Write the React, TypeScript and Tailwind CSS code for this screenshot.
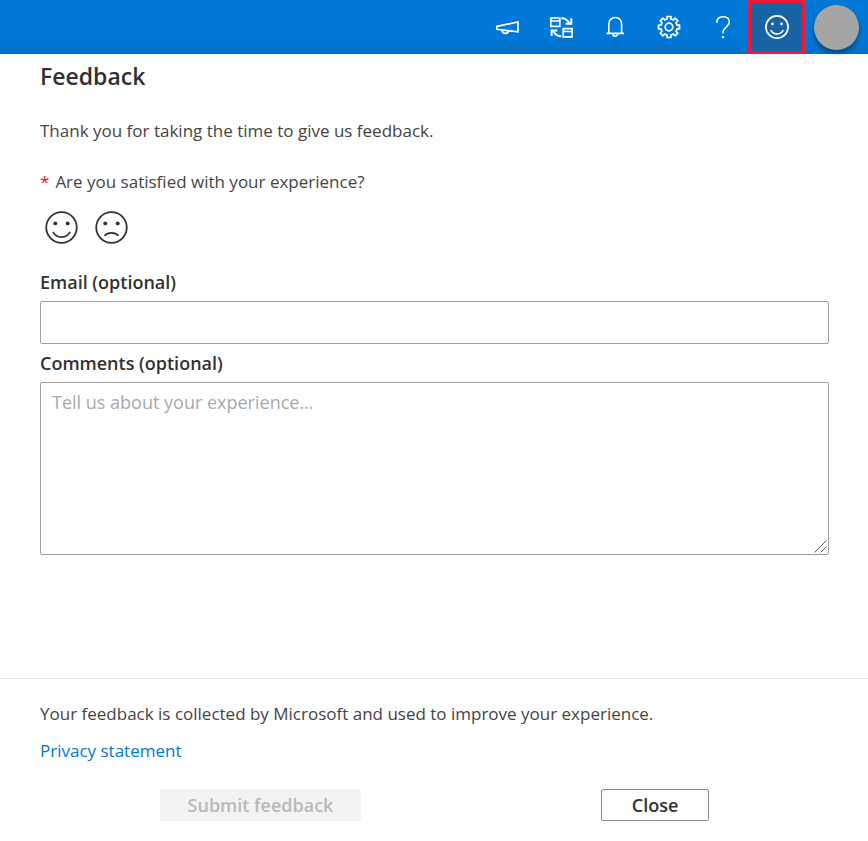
import type { ReactNode } from "react";

function HeaderButton({ label, children }: { label: string; children: ReactNode }) {
  return (
    <button type="button" aria-label={label} className="flex h-full w-[54px] items-center justify-center">
      {children}
    </button>
  );
}

function Face({ mood, className, stroke }: { mood: "happy" | "sad"; className: string; stroke: number }) {
  return (
    <svg viewBox="0 0 32 32" className={className} fill="none" stroke="currentColor" strokeWidth={stroke} aria-hidden="true">
      <circle cx="16" cy="16" r="14.8" />
      <circle cx="10" cy="12" r="1.9" fill="currentColor" stroke="none" />
      <circle cx="22" cy="12" r="1.9" fill="currentColor" stroke="none" />
      {mood === "happy" ? <path d="M7.6 20.2C11.6 26.9 20.4 26.9 24.4 20.2" /> : <path d="M9.2 24C12.5 20.4 19.5 20.4 22.8 24" />}
    </svg>
  );
}

const gearPath = Array.from({ length: 8 }, (_, i) => {
  const points = [
    [-22.5, 8.2],
    [-13, 8.2],
    [-10.5, 10.7],
    [10.5, 10.7],
    [13, 8.2],
  ];
  return points
    .map(([angle, radius], j) => {
      const t = ((angle + i * 45) * Math.PI) / 180;
      return `${i === 0 && j === 0 ? "M" : "L"}${(12 + radius * Math.sin(t)).toFixed(2)} ${(12 - radius * Math.cos(t)).toFixed(2)}`;
    })
    .join("");
}).join("") + "Z";

export default function App() {
  return (
    <div className="flex min-h-screen flex-col bg-white font-['Segoe_UI','Open_Sans',sans-serif] text-[17px] leading-6 text-[#323130]">
      <header className="flex h-[54px] items-center justify-end bg-linear-to-b from-[#0078d7] from-70% to-[#0070c9] text-white">
        <HeaderButton label="Announcements">
          <svg viewBox="0 0 24 24" className="size-6" fill="none" stroke="currentColor" strokeWidth="1.7" aria-hidden="true">
            <path d="M1.8 11.3 23 7v9.8L1.8 14.3Z" />
            <path d="M7.2 15.2c.3 4.2 5.7 4.2 6.2.8" />
          </svg>
        </HeaderButton>
        <HeaderButton label="Switch directory">
          <svg viewBox="0 0 24 24" className="size-6" fill="none" stroke="currentColor" strokeWidth="1.7" aria-hidden="true">
            <path d="M1.8 3h9v8.4h-9ZM1.8 6h9M14.2 13.6h8.9v8.2h-8.9ZM14.2 16.5h8.9" />
            <path d="M12.4 3.3c4 0 6.2 1.8 7.9 5M22.3 3.3v5.4h-5.8M12.2 21.3c-4.1 0-6.4-2-7.8-5.4M2.6 21.1v-5.6h5.8" strokeWidth="2" />
          </svg>
        </HeaderButton>
        <HeaderButton label="Notifications">
          <svg viewBox="0 0 24 24" className="size-6" fill="none" stroke="currentColor" strokeWidth="1.6" aria-hidden="true">
            <path d="M3.4 18.4h17.6M5.8 18.4V9.4c0-4.3 2.7-6.9 6.4-6.9s6.4 2.6 6.4 6.9v9" />
            <path d="M9.8 18.8a2.4 2.4 0 0 0 4.8 0" />
          </svg>
        </HeaderButton>
        <HeaderButton label="Settings">
          <svg viewBox="0 0 24 24" className="size-6" fill="none" stroke="currentColor" strokeWidth="1.7" strokeLinejoin="round" aria-hidden="true">
            <path d={gearPath} />
            <circle cx="12" cy="12" r="3.8" />
          </svg>
        </HeaderButton>
        <HeaderButton label="Help">
          <svg viewBox="0 0 24 24" className="size-6" fill="none" stroke="currentColor" strokeWidth="1.6" aria-hidden="true">
            <path d="M5.8 7.8C5.8 4 8.2 1.7 12 1.7c3.8 0 6.3 2 6.3 5.2 0 4.9-6.3 5.5-6.3 10.2v1.2" />
            <path d="M12 21v2.2" strokeWidth="2.2" />
          </svg>
        </HeaderButton>
        <button type="button" aria-label="Feedback" className="-ml-0.5 flex h-full w-[57px] items-center justify-center border-3 border-[#f11a34] bg-[#1763a6]">
          <Face mood="happy" className="size-6" stroke={2.2} />
        </button>
        <button type="button" aria-label="Account" className="mx-[9px] size-[45px] rounded-full bg-[#a5a5a5] shadow-[0_3px_5px_rgba(0,0,0,0.4)]" />
      </header>

      <form className="flex flex-1 flex-col" onSubmit={(event) => event.preventDefault()}>
        <div className="flex flex-1 flex-col pt-[7px] pr-[39px] pl-10">
          <h1 className="text-[23px] leading-[30px] font-semibold">Feedback</h1>
          <p className="mt-7 text-[#454442]">Thank you for taking the time to give us feedback.</p>
          <fieldset className="mt-[27px]">
            <legend className="text-[#454442]">
              <span className="mr-1.5 text-[#e81123]">*</span>Are you satisfied with your experience?
            </legend>
            <div className="mt-[17px] ml-[5px] flex gap-[17px]">
              <button type="button" aria-label="Satisfied">
                <Face mood="happy" className="size-[33px]" stroke={1.7} />
              </button>
              <button type="button" aria-label="Dissatisfied">
                <Face mood="sad" className="size-[33px]" stroke={1.7} />
              </button>
            </div>
          </fieldset>
          <label htmlFor="email" className="mt-[26px] text-lg leading-6 font-semibold">Email (optional)</label>
          <input id="email" type="email" className="mt-[7px] h-[43px] rounded-xs border border-[#a19f9d] px-[11px] text-lg outline-none" />
          <label htmlFor="comments" className="mt-[7px] text-lg leading-6 font-semibold">Comments (optional)</label>
          <div className="relative mt-[7px] flex">
            <textarea
              id="comments"
              placeholder="Tell us about your experience..."
              className="h-[173px] w-full resize-none rounded-xs border border-[#a19f9d] px-[11px] py-[7px] text-lg leading-6 outline-none placeholder:text-[#a9a9a9]"
            />
            <svg viewBox="0 0 13 13" className="pointer-events-none absolute right-0.5 bottom-0.5 size-[13px]" stroke="#555" aria-hidden="true">
              <path d="M.5 12.5l12-12M6.5 12.5l6-6" />
            </svg>
          </div>
        </div>

        <footer className="border-t border-[#e5e5e5] pt-[23px] pr-[39px] pb-5 pl-10 text-[#454442]">
          <p>Your feedback is collected by Microsoft and used to improve your experience.</p>
          <p className="mt-[13px]">
            <a href="#privacy" className="text-[#0078d4]">Privacy statement</a>
          </p>
          <div className="mt-[26px] flex justify-between px-[120px] text-lg leading-6">
            <button type="submit" disabled className="h-8 w-[201px] rounded-xs bg-[#f3f3f3] font-semibold text-[#b9b8b7]">Submit feedback</button>
            <button type="button" className="h-8 w-[108px] rounded-xs border border-[#8a8886] font-semibold text-[#323130]">Close</button>
          </div>
        </footer>
      </form>
    </div>
  );
}
